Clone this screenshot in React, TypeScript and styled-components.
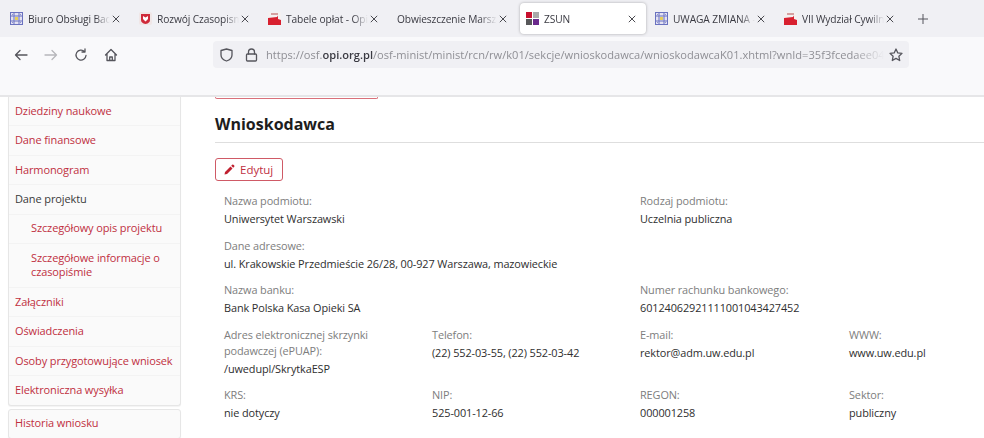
import React from "react";
import styled, { createGlobalStyle } from "styled-components";

const Global = createGlobalStyle`
  html, body { margin: 0; padding: 0; background: #fff; overflow: hidden; }
  body { font-family: "Open Sans", "Noto Sans", "Liberation Sans", sans-serif; }
  * { box-sizing: border-box; }
`;

const Page = styled.div`
  width: 984px;
  height: 438px;
  overflow: hidden;
  display: flex;
  flex-direction: column;
`;

const TabBar = styled.div`
  height: 37px;
  flex: none;
  background: #f0f0f4;
  display: flex;
  align-items: center;
  padding-left: 4px;
`;

const Tab = styled.div<{ $active?: boolean }>`
  width: 126px;
  height: 31px;
  margin-right: 3px;
  flex: none;
  display: flex;
  align-items: center;
  gap: 5px;
  padding: 0 10px 0 6px;
  border-radius: 4px;
  font-size: 10.2px;
  letter-spacing: -0.1px;
  color: #3a3a42;
  background: ${(p) => (p.$active ? "#fff" : "transparent")};
  box-shadow: ${(p) => (p.$active ? "0 0 3px rgba(0,0,0,.3)" : "none")};
`;

const TabTitle = styled.span`
  flex: 1;
  min-width: 0;
  margin-right: -3px;
  overflow: hidden;
  white-space: nowrap;
  -webkit-mask-image: linear-gradient(90deg, #000 82%, transparent 100%);
  mask-image: linear-gradient(90deg, #000 82%, transparent 100%);
`;

const PlusBox = styled.div`
  margin-left: 10px;
  display: flex;
  align-items: center;
  color: #55555c;
`;

const Toolbar = styled.div`
  height: 60px;
  flex: none;
  background: #f9f9fb;
  border-bottom: 2px solid #e6e6e8;
  display: flex;
  align-items: flex-start;
  padding: 4px 0 0 14px;
`;

const NavIcons = styled.div`
  width: 199px;
  height: 27px;
  display: flex;
  align-items: center;
  gap: 16px;
  color: #55555c;
`;

const UrlBar = styled.div`
  width: 696px;
  height: 27px;
  background: #f0f0f4;
  border-radius: 4px;
  display: flex;
  align-items: center;
  padding: 0 6px 0 7px;
  color: #55555c;
`;

const UrlText = styled.div`
  flex: 1;
  min-width: 0;
  margin-left: 8px;
  overflow: hidden;
  white-space: nowrap;
  font-size: 11.1px;
  color: #8f8f95;
  -webkit-mask-image: linear-gradient(90deg, #000 95%, transparent 100%);
  mask-image: linear-gradient(90deg, #000 95%, transparent 100%);
  b { color: #3a3a42; font-weight: 600; }
`;

const Content = styled.div`
  flex: 1;
  min-height: 0;
  display: flex;
`;

const Side = styled.aside`
  width: 173px;
  margin-left: 8px;
  flex: none;
  display: flex;
  flex-direction: column;
  gap: 3px;
`;

const Panel = styled.div`
  background: #fafafa;
  border: 1px solid #e6e6e6;
  border-radius: 3px;
  box-shadow: 0 1px 1px rgba(0,0,0,.05);
`;

const NavPanel = styled(Panel)`
  border-top: none;
  border-radius: 0 0 3px 3px;
`;

const NavItem = styled.div<{ $sub?: boolean; $plain?: boolean }>`
  padding: ${(p) => (p.$sub ? "6.8px 6px 7px 22px" : "6.8px 0 7px 6px")};
  font-size: 11px;
  line-height: 14.6px;
  letter-spacing: -0.12px;
  color: ${(p) => (p.$plain ? "#3a3a3a" : "#c0303f")};
  border-bottom: 1px solid #f3f3f3;
  &:last-child { border-bottom: none; }
`;

const Main = styled.main`
  flex: 1;
  min-width: 0;
  margin-left: 34px;
`;

const TopStub = styled.div`
  width: 163px;
  height: 2px;
  border: 1px solid #d9707a;
  border-top: none;
  border-radius: 0 0 3px 3px;
`;

const Heading = styled.h2`
  margin: 15px 0 0;
  height: 29px;
  font-size: 16px;
  line-height: 20px;
  font-weight: 700;
  color: #1d1d1d;
  letter-spacing: 0;
  border-bottom: 1px solid #dedede;
`;

const EditButton = styled.button`
  margin-top: 15px;
  width: 68px;
  height: 23px;
  padding: 0 0 0 8px;
  display: flex;
  align-items: center;
  gap: 5px;
  background: #fff;
  border: 1px solid #cf5a66;
  border-radius: 3px;
  font: inherit;
  font-size: 11.5px;
  color: #c0303f;
`;

const Grid = styled.div`
  display: grid;
  grid-template-columns: 208px 208px 209px 135px;
  padding: 12px 0 0 9px;
  row-gap: 10.5px;
`;

const Field = styled.div<{ $span?: number }>`
  grid-column: span ${(p) => p.$span ?? 1};
  padding-right: 30px;
  font-size: 10.9px;
  line-height: 16px;
  letter-spacing: -0.1px;
`;

const Label = styled.div`
  color: #7d7d7d;
  margin-bottom: 2px;
`;

const Value = styled.div`
  color: #2e2e2e;
`;

const Fav = styled.svg`
  width: 13px;
  height: 13px;
  flex: none;
`;

const IconMap = () => (
  <Fav viewBox="0 0 13 13">
    <rect width="13" height="13" fill="#e4e2f2" />
    <path d="M.5 0v13M4 0v13M9 0v13M12.500 0v13M0 .5h13M0 4h13M0 9h13M0 12.500h13" stroke="#6a72c0" strokeWidth="1" />
    <path d="M2 2l9 9M11 2l-9 9" stroke="#8f95d2" strokeWidth="1" />
    <rect x="5" y="5" width="3" height="3" fill="#e6cf5c" />
  </Fav>
);
const IconEagle = () => (
  <Fav viewBox="0 0 13 13">
    <rect width="13" height="13" rx="2" fill="#f0e6e6" />
    <path d="M2 2h9v6q0 3-4.500 4Q2 11 2 8z" fill="#cf2a3a" />
    <path d="M4 4l2.500 1.500L9 4v3L6.500 9.500 4 7z" fill="#fff" />
  </Fav>
);
const IconFlag = () => (
  <Fav viewBox="0 0 13 13">
    <rect width="13" height="13" fill="#f4f1f1" />
    <rect x="3" y="1" width="7" height="2" fill="#d5a0a0" />
    <path d="M0 6l9-1 1-1.500V7l3 1v5H0z" fill="#d8202f" />
  </Fav>
);
const IconZsun = () => (
  <Fav viewBox="0 0 13 13">
    <rect width="6" height="6" fill="#c8102e" />
    <rect x="7" width="6" height="6" fill="#a9a9a9" />
    <rect y="7" width="6" height="6" fill="#58585a" />
    <rect x="7" y="7" width="6" height="6" fill="#6a2a8c" />
  </Fav>
);

const CloseIcon = styled.svg`
  flex: none;
  position: relative;
`;

const Close = () => (
  <CloseIcon width="8" height="8" viewBox="0 0 8 8">
    <path d="M.8.8l6.400 6.400M7.200.8L.8 7.200" stroke="#4a4a50" strokeWidth="1" />
  </CloseIcon>
);

const Stroke = styled.svg<{ $dim?: boolean; $gap?: number }>`
  flex: none;
  fill: none;
  stroke: currentColor;
  stroke-width: 1.3;
  stroke-linecap: round;
  stroke-linejoin: round;
  opacity: ${(p) => (p.$dim ? 0.4 : 1)};
  margin-left: ${(p) => p.$gap ?? 0}px;
`;

const tabs: { title: string; icon?: React.ReactNode; active?: boolean }[] = [
  { title: "Biuro Obsługi Badań", icon: <IconMap /> },
  { title: "Rozwój Czasopism", icon: <IconEagle /> },
  { title: "Tabele opłat - Opi", icon: <IconFlag /> },
  { title: "Obwieszczenie Marszałka" },
  { title: "ZSUN", icon: <IconZsun />, active: true },
  { title: "UWAGA ZMIANA - O", icon: <IconMap /> },
  { title: "VII Wydział Cywilny", icon: <IconFlag /> },
];

const nav: { t: string; sub?: boolean; plain?: boolean }[] = [
  { t: "Dziedziny naukowe" },
  { t: "Dane finansowe" },
  { t: "Harmonogram" },
  { t: "Dane projektu", plain: true },
  { t: "Szczegółowy opis projektu", sub: true },
  { t: "Szczegółowe informacje o czasopiśmie", sub: true },
  { t: "Załączniki" },
  { t: "Oświadczenia" },
  { t: "Osoby przygotowujące wniosek" },
  { t: "Elektroniczna wysyłka" },
];

const fields: { l: string; v: string; span?: number }[] = [
  { l: "Nazwa podmiotu:", v: "Uniwersytet Warszawski", span: 2 },
  { l: "Rodzaj podmiotu:", v: "Uczelnia publiczna", span: 2 },
  { l: "Dane adresowe:", v: "ul. Krakowskie Przedmieście 26/28, 00-927 Warszawa, mazowieckie", span: 4 },
  { l: "Nazwa banku:", v: "Bank Polska Kasa Opieki SA", span: 2 },
  { l: "Numer rachunku bankowego:", v: "60124062921111001043427452", span: 2 },
  { l: "Adres elektronicznej skrzynki podawczej (ePUAP):", v: "/uwedupl/SkrytkaESP" },
  { l: "Telefon:", v: "(22) 552-03-55, (22) 552-03-42" },
  { l: "E-mail:", v: "rektor@adm.uw.edu.pl" },
  { l: "WWW:", v: "www.uw.edu.pl" },
  { l: "KRS:", v: "nie dotyczy" },
  { l: "NIP:", v: "525-001-12-66" },
  { l: "REGON:", v: "000001258" },
  { l: "Sektor:", v: "publiczny" },
];

export default function App() {
  return (
    <Page>
      <Global />
      <TabBar>
        {tabs.map((t) => (
          <Tab key={t.title} $active={t.active}>
            {t.icon}
            <TabTitle>{t.title}</TabTitle>
            <Close />
          </Tab>
        ))}
        <PlusBox>
          <svg width="12" height="12" viewBox="0 0 12 12">
            <path d="M6 1v10M1 6h10" stroke="currentColor" strokeWidth="1" />
          </svg>
        </PlusBox>
      </TabBar>
      <Toolbar>
        <NavIcons>
          <Stroke width="14" height="14" viewBox="0 0 14 14">
            <path d="M13 7H1.500M6 2.500L1.500 7 6 11.500" />
          </Stroke>
          <Stroke $dim width="14" height="14" viewBox="0 0 14 14">
            <path d="M1 7h11.500M8 2.500L12.500 7 8 11.500" />
          </Stroke>
          <Stroke width="14" height="14" viewBox="0 0 14 14">
            <path d="M12 7.500a5 5 0 1 1-1.500-4M11 1v3H8" />
          </Stroke>
          <Stroke width="14" height="14" viewBox="0 0 14 14">
            <path d="M1.500 7L7 1.500 12.500 7M3 6v6.500h8V6M5.700 12.500V9h2.600v3.500" />
          </Stroke>
        </NavIcons>
        <UrlBar>
          <Stroke width="13" height="14" viewBox="0 0 13 14">
            <path d="M6.500 1L12 2.500V7c0 3-2.500 5-5.500 6C3.500 12 1 10 1 7V2.500z" />
          </Stroke>
          <Stroke $gap={12} width="13" height="14" viewBox="0 0 13 14">
            <rect x="1.500" y="6" width="10" height="7" rx="1" />
            <path d="M3.500 6V4a3 3 0 0 1 6 0v2" />
          </Stroke>
          <UrlText>
            https://osf.<b>opi.org.pl</b>/osf-minist/minist/rcn/rw/k01/sekcje/wnioskodawca/wnioskodawcaK01.xhtml?wnId=35f3fcedaee04b
          </UrlText>
          <Stroke $gap={5} width="14" height="14" viewBox="0 0 14 14">
            <path d="M7 1l1.800 3.900 4.200.5-3.100 2.900.8 4.200L7 10.400 3.300 12.500l.8-4.200L1 5.400l4.200-.5z" />
          </Stroke>
        </UrlBar>
      </Toolbar>
      <Content>
        <Side>
          <NavPanel>
            {nav.map((n) => (
              <NavItem key={n.t} $sub={n.sub} $plain={n.plain}>
                {n.t}
              </NavItem>
            ))}
          </NavPanel>
          <Panel>
            <NavItem>Historia wniosku</NavItem>
          </Panel>
        </Side>
        <Main>
          <TopStub />
          <Heading>Wnioskodawca</Heading>
          <EditButton>
            <svg width="11" height="11" viewBox="0 0 11 11">
              <path d="M1 8l-.5 2.500L3 10l5.500-5.500-2-2zM7.200 1.800l2 2 1-1a.8.8 0 0 0 0-1.200l-.8-.8a.8.8 0 0 0-1.200 0z" fill="#c0202f" />
            </svg>
            Edytuj
          </EditButton>
          <Grid>
            {fields.map((f) => (
              <Field key={f.l} $span={f.span}>
                <Label>{f.l}</Label>
                <Value>{f.v}</Value>
              </Field>
            ))}
          </Grid>
        </Main>
      </Content>
    </Page>
  );
}
